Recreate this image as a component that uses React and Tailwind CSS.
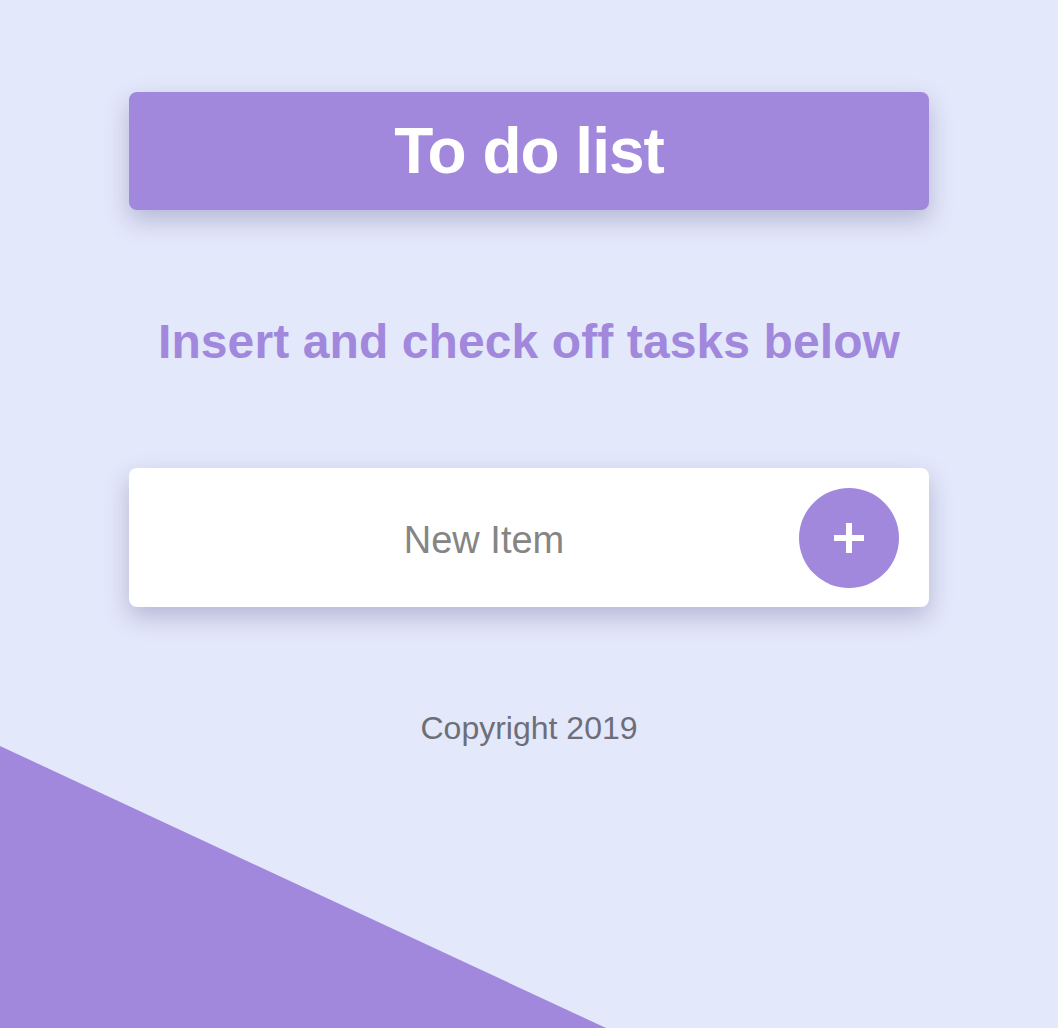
import React, { useState } from 'react';

const PURPLE = '#a188dd';

const App = () => {
    const [item, setItem] = useState('');

    return (
        <div className="relative min-h-screen overflow-hidden bg-[#e4e8fb] font-['Liberation_Sans',Arial,sans-serif]">
            {/* Decorative corner */}
            <svg
                className="absolute bottom-0 left-0 w-[606px] h-[282px]"
                viewBox="0 0 606 282"
                preserveAspectRatio="none"
            >
                <polygon points="0,0 606,282 0,282" fill={PURPLE} />
            </svg>

            <div className="relative mx-auto w-[800px] pt-[92px] pb-10">
                <header className="flex h-[118px] items-center justify-center rounded-lg bg-[#a188dd] shadow-[0_10px_24px_rgba(80,80,130,0.32)]">
                    <h1 className="text-[64px] font-bold leading-none tracking-[-1px] text-white">To do list</h1>
                </header>

                <p className="mt-[108px] text-center text-[48px] font-bold leading-none tracking-[0.1px] text-[#a188dd]">
                    Insert and check off tasks below
                </p>

                <div className="mt-[102px] flex h-[139px] items-center rounded-lg bg-white pl-10 pr-[30px] shadow-[0_10px_24px_rgba(80,80,130,0.32)]">
                    <input
                        type="text"
                        value={item}
                        onChange={(e) => setItem(e.target.value)}
                        placeholder="New Item"
                        className="min-w-0 flex-1 bg-transparent pt-[5px] text-center text-[38px] font-light text-[#555] outline-none placeholder:text-[#858585]"
                    />
                    <button className="flex h-[100px] w-[100px] shrink-0 items-center justify-center rounded-full bg-[#a188dd]">
                        <svg width="30" height="30" viewBox="0 0 30 30">
                            <rect x="0" y="12" width="30" height="6" fill="#fff" />
                            <rect x="12" y="0" width="6" height="30" fill="#fff" />
                        </svg>
                    </button>
                </div>

                <p className="mt-[105px] text-center text-[32px] leading-none text-[#6e6e78]">Copyright 2019</p>
            </div>
        </div>
    );
};

export default App;
